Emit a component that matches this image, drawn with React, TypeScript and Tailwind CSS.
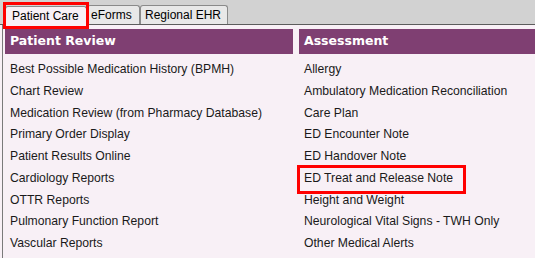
import React from 'react'

const reviewItems = [
  'Best Possible Medication History (BPMH)',
  'Chart Review',
  'Medication Review (from Pharmacy Database)',
  'Primary Order Display',
  'Patient Results Online',
  'Cardiology Reports',
  'OTTR Reports',
  'Pulmonary Function Report',
  'Vascular Reports',
]

const assessmentItems = [
  'Allergy',
  'Ambulatory Medication Reconciliation',
  'Care Plan',
  'ED Encounter Note',
  'ED Handover Note',
  'ED Treat and Release Note',
  'Height and Weight',
  'Neurological Vital Signs - TWH Only',
  'Other Medical Alerts',
]

function Panel({ title, items, highlight, className }: { title: string; items: string[]; highlight?: string; className: string }) {
  return (
    <div className={className}>
      <div className="h-[25px] bg-[#7f3f72] pl-[5px] flex items-center text-white font-bold text-[12.5px] font-['DejaVu_Sans',sans-serif]">
        {title}
      </div>
      <div className="pt-[5px] pl-[5px]">
        {items.map((item) => (
          <div key={item} className="h-[21.75px] leading-[21.75px] text-[12.2px] text-[#1a1a1a] whitespace-nowrap relative">
            {item}
            {item === highlight && (
              <div className="absolute left-[-7px] top-[-3px] w-[169px] h-[29px] border-[3px] border-[#ff0000]" />
            )}
          </div>
        ))}
      </div>
    </div>
  )
}

export default function App() {
  return (
    <div className="w-[535px] h-[258px] bg-[#f8f0f6] overflow-hidden relative font-['Liberation_Sans',Arial,sans-serif]">
      {/* Tab strip */}
      <div className="h-[25px] bg-[#d2d2d2] border-b border-[#5c5c5c] flex items-end pl-[5px] relative">
        <div className="h-[22px] w-[82px] mb-[-4px] bg-[#f8f0f6] border border-b-0 border-[#8a8a8a] rounded-t-[3px] flex items-center pl-[6px] pb-[3px] text-[12px] text-black whitespace-nowrap relative z-10">
          Patient Care
        </div>
        <div className="h-[19px] w-[53px] bg-[#e8e8e8] border border-b-0 border-[#8a8a8a] rounded-t-[3px] flex items-center pl-[3px] text-[12px] text-black whitespace-nowrap">
          eForms
        </div>
        <div className="h-[19px] w-[88px] bg-[#e8e8e8] border border-b-0 border-[#8a8a8a] rounded-t-[3px] flex items-center pl-[4px] text-[12px] text-black whitespace-nowrap">
          Regional EHR
        </div>
        <div className="absolute left-[3px] top-[2px] w-[86px] h-[27px] border-[3px] border-[#ff0000] z-20" />
      </div>

      {/* Content */}
      <div className="h-[233px] border-l border-[#7a7a7a] ml-[2px] pt-[4px] pl-[2px] flex gap-[6px]">
        <Panel title="Patient Review" items={reviewItems} className="w-[288px] shrink-0" />
        <Panel title="Assessment" items={assessmentItems} highlight="ED Treat and Release Note" className="flex-1" />
      </div>
    </div>
  )
}
